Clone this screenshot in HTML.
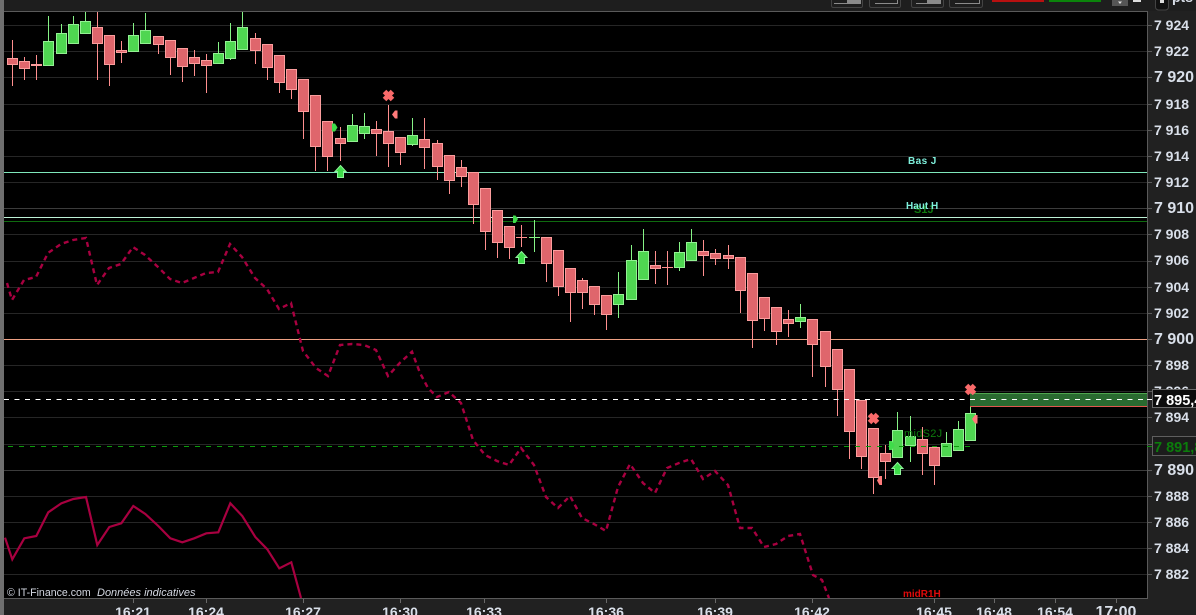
<!DOCTYPE html>
<html lang="fr"><head><meta charset="utf-8"><title>Graphique</title>
<style>
html,body{margin:0;padding:0;background:#000;width:1196px;height:615px;overflow:hidden}
svg{display:block}
text{font-family:"Liberation Sans",sans-serif}
.y{font-weight:700;font-size:14px;fill:#d9dfe9}
.Y{font-weight:700;font-size:16px;fill:#d9dfe9}
.t{font-weight:700;font-size:14px;fill:#d9dfe9;text-anchor:middle}
</style></head><body>
<svg width="1196" height="615" viewBox="0 0 1196 615" xmlns="http://www.w3.org/2000/svg">
<rect width="1196" height="615" fill="#000"/>
<!-- chart grid -->
<path d="M4 25.500H1147M4 51.500H1147M4 77.500H1147M4 104.500H1147M4 130.500H1147M4 156.500H1147M4 182.500H1147M4 234.500H1147M4 261.500H1147M4 287.500H1147M4 313.500H1147M4 365.500H1147M4 391.500H1147M4 417.500H1147M4 444.500H1147M4 496.500H1147M4 522.500H1147M4 548.500H1147M4 574.500H1147" stroke="#262626" fill="none"/>
<path d="M4 208.500H1147M4 470.500H1147" stroke="#3c3c3c" fill="none"/>
<!-- level lines -->
<path d="M4 172.500H1147" stroke="#7fe8bb"/>
<path d="M4 217.500H1147" stroke="#bdf2d6"/>
<path d="M4 221.500H1147" stroke="#0f6a0f"/>
<path d="M4 339.500H1147" stroke="#eda184"/>
<!-- crimson lines -->
<polyline fill="none" stroke="#a80040" stroke-width="2.200" points="5,537.700 12.300,559.300 24.300,538.300 36.300,536 48.300,512.300 61.300,503.300 73.300,499 86,497 97.300,545 109.300,527 121.300,523.300 133.300,506 145.300,514 158.300,526 170.300,538.300 182.300,542.300 194.300,538.300 206.300,533.300 218.300,532.300 230.300,503.300 242.300,516 255.300,537 267.300,549.300 279.300,568.300 291.300,562.300 301,598"/>
<polyline fill="none" stroke="#a80040" stroke-width="2.400" stroke-dasharray="5 4" points="7,283 12,300 24,280 36,277 48,253 61,244 73,240 86,238 97,285 109,268 121,264 133,247 145,255 158,267 170,279 182,283 194,278 206,273 218,272 230,244 242,257 255,278 267,289 279,309 291,303 303,351 316,368 328,376 340,345 352,344 364,345 376,350 388,376 400,362.700 412,351.700 420,373 428,388 437,397 449,392 461,403 473,440 485,455 497,461 509,465 521,448 534,465 546,497 558,508 570,496 582,518 594,524 606,531 618,487 630,464 643,483 655,493 667,468 679,463 691,459 703,479 715,471 728,485 740,528 752,528 764,547 776,544 788,536 800,534 813,575 822,580 829,598"/>
<!-- wicks -->
<path fill="none" stroke="#ff8f8f" d="M12.500 40V86M24.500 57V80M36.500 55V80M97.500 12V80M109.500 35V86M121.500 41V63M158.500 36V54M170.500 40V75M182.500 48V82M194.500 50V76M206.500 54V93M255.500 33V64M267.500 44V80M279.500 55V93M291.500 69V99M303.500 79V139M315.500 95V171M327.500 121V171M340.500 127V161M376.500 121V156M388.500 105V167M400.500 137V165M424.500 118V169M437.500 140V180M449.500 155V194M461.500 160V187M473.500 172V224M485.500 188V250M497.500 210V258M509.500 226V259M521.500 225V247M516 237.500H527M546.500 237V282M558.500 250V296M570.500 268V322M582.500 278V309M594.500 286V315M606.500 295V330M655.500 251V284M667.500 251V285M662 267.500H673M703.500 240V276M715.500 249V265M728.500 245V269M740.500 257V313M752.500 273V348M764.500 297V331M776.500 307V345M788.500 310V337M812.500 319V377M825.500 331V387M837.500 349V416M849.500 369V459M861.500 400V469M873.500 428V494M885.500 445V479M922.500 427V475M934.500 447V485"/>
<path fill="none" stroke="#86f386" d="M48.500 16V66M61.500 24V53M73.500 16V43M85.500 12V33M133.500 23V51M145.500 13V43M218.500 42V63M230.500 23V60M242.500 12V49M352.500 114V141M364.500 113V139M412.500 118V146M534.500 220V252M529 237.500H540M618.500 272V318M631.500 245V299M643.500 229V279M679.500 242V271M691.500 229V260M800.500 304V328M897.500 412V457M910.500 416V462M946.500 432V456M958.500 421V450M970.500 393V440"/>
<!-- red bodies -->
<path fill="#df666c" stroke="#fb9d9d" d="M7.500 58.500h10v6h-10zM19.500 61.500h10v7h-10zM31.500 64.500h10v1h-10zM92.500 27.500h10v16h-10zM104.500 35.500h10v29h-10zM116.500 50.500h10v2h-10zM153.500 36.500h10v8h-10zM165.500 40.500h10v17h-10zM177.500 48.500h10v18h-10zM189.500 57.500h10v6h-10zM201.500 60.500h10v5h-10zM250.500 38.500h10v12h-10zM262.500 44.500h10v23h-10zM274.500 55.500h10v27h-10zM286.500 69.500h10v20h-10zM298.500 79.500h10v32h-10zM310.500 95.500h10v51h-10zM322.500 121.500h10v35h-10zM335.500 138.500h10v5h-10zM371.500 129.500h10v4h-10zM383.500 131.500h10v12h-10zM395.500 137.500h10v15h-10zM419.500 139.500h10v8h-10zM432.500 143.500h10v23h-10zM444.500 155.500h10v25h-10zM456.500 167.500h10v9h-10zM468.500 172.500h10v32h-10zM480.500 188.500h10v43h-10zM492.500 210.500h10v32h-10zM504.500 226.500h10v21h-10zM541.500 237.500h10v26h-10zM553.500 250.500h10v36h-10zM565.500 268.500h10v24h-10zM577.500 280.500h10v12h-10zM589.500 286.500h10v18h-10zM601.500 295.500h10v19h-10zM650.500 265.500h10v3h-10zM698.500 251.500h10v4h-10zM710.500 253.500h10v5h-10zM723.500 255.500h10v3h-10zM735.500 257.500h10v33h-10zM747.500 273.500h10v47h-10zM759.500 297.500h10v21h-10zM771.500 307.500h10v24h-10zM783.500 319.500h10v4h-10zM807.500 319.500h10v25h-10zM820.500 331.500h10v35h-10zM832.500 349.500h10v40h-10zM844.500 369.500h10v62h-10zM856.500 400.500h10v56h-10zM868.500 428.500h10v49h-10zM880.500 453.500h10v8h-10zM917.500 439.500h10v14h-10zM929.500 447.500h10v18h-10z"/>
<!-- green bodies -->
<path fill="#4fd651" stroke="#93f093" d="M43.500 41.500h10v24h-10zM56.500 33.500h10v20h-10zM68.500 24.500h10v19h-10zM80.500 21.500h10v12h-10zM128.500 35.500h10v16h-10zM140.500 30.500h10v13h-10zM213.500 53.500h10v10h-10zM225.500 41.500h10v17h-10zM237.500 27.500h10v22h-10zM347.500 125.500h10v16h-10zM359.500 126.500h10v7h-10zM407.500 135.500h10v9h-10zM613.500 294.500h10v10h-10zM626.500 260.500h10v39h-10zM638.500 251.500h10v28h-10zM674.500 252.500h10v15h-10zM686.500 242.500h10v18h-10zM795.500 317.500h10v4h-10zM892.500 430.500h10v27h-10zM905.500 436.500h10v9h-10zM941.500 443.500h10v13h-10zM953.500 429.500h10v21h-10zM965.500 413.500h10v27h-10z"/>
<!-- price box on chart -->
<rect x="970" y="393" width="177" height="14" fill="#2a6a30"/>
<path d="M970 393.500H1147" stroke="#4ea64e"/>
<path d="M970 406.500H1147" stroke="#e0584f"/>
<path d="M4 399.500H1147" stroke="#fff" stroke-dasharray="5 5.500"/>
<path d="M8 446.500H970" stroke="#0c9a0c" stroke-dasharray="5 6"/>
<!-- markers X -->
<path d="M384.500 91.500L392.500 99.500M392.500 91.500L384.500 99.500" stroke="#f96a6a" stroke-width="5" fill="none"/>
<path d="M869.500 414.500L877.500 422.500M877.500 414.500L869.500 422.500" stroke="#f96a6a" stroke-width="5" fill="none"/>
<path d="M966.500 385.500L974.500 393.500M974.500 385.500L966.500 393.500" stroke="#f96a6a" stroke-width="5" fill="none"/>
<!-- up arrows -->
<path d="M340.500 165.500L346 171.500H343.500V177.500H337.500V171.500H335z" fill="#3fdc4a" stroke="#8ff59a"/>
<path d="M521.500 251.500L527 257.500H524.500V263.500H518.500V257.500H516z" fill="#3fdc4a" stroke="#8ff59a"/>
<path d="M897.500 462.500L903 468.500H900.500V474.500H894.500V468.500H892z" fill="#3fdc4a" stroke="#8ff59a"/>
<!-- triangles -->
<path d="M332 123.500H335L337.500 127.500L335 131.500H332z" fill="#3fdc4a"/>
<path d="M513 215.500H515.500L518 219L515.500 223H513z" fill="#3fdc4a"/>
<path d="M889 441H892L894.500 445.500L892 450H889z" fill="#3fdc4a"/>
<path d="M397.500 110.500V118.500H395L392 114.500L395 110.500z" fill="#ff7b7b"/>
<path d="M882 476V485H879.500L877 480.500L879.500 476z" fill="#ff7b7b"/>
<path d="M977.500 415V423.500H975L972 419L975 415z" fill="#ff7b7b"/>
<!-- chart labels -->
<text x="908" y="164" font-size="10" font-weight="700" letter-spacing=".4" fill="#7ff0dc">Bas J</text>
<text x="914" y="213" font-size="11" font-weight="700" fill="#0f7a0f">S1J</text>
<text x="906" y="209" font-size="10" font-weight="700" fill="#7ff0dc">Haut H</text>
<text x="904" y="437" font-size="11" fill="#0d7a0d" letter-spacing=".3">midS2J</text>
<text x="903" y="597" font-size="10" font-weight="700" fill="#e00a0a">midR1H</text>
<text x="7" y="596" font-size="10.600" fill="#d4d8e2">© IT-Finance.com</text>
<text x="97" y="596" font-size="11" font-style="italic" fill="#d4d8e2">Données indicatives</text>
<!-- panels -->
<rect x="0" y="0" width="1196" height="11" fill="#1e1e1e"/>
<rect x="1148" y="11" width="48" height="604" fill="#212121"/>
<rect x="0" y="599" width="1196" height="16" fill="#212121"/>
<rect x="0" y="0" width="4" height="615" fill="#6f6f6f"/>
<path d="M4 11.500H1147.500V598.500H4" fill="none" stroke="#5a5a5a"/>
<!-- toolbar -->
<g fill="none" stroke="#8b8b8b">
<path d="M831.500 0V5.500Q831.500 7.500 833.500 7.500H861Q862.500 7.500 862.500 5.500V0" stroke="#444"/>
<path d="M869.500 0V5.500Q869.500 7.500 871.500 7.500H899Q900.500 7.500 900.500 5.500V0" stroke="#444"/>
<path d="M911.500 0V5.500Q911.500 7.500 913.500 7.500H941Q943.500 7.500 943.500 5.500V0" stroke="#444"/>
<path d="M949.500 0V5.500Q949.500 7.500 951.500 7.500H980Q982.500 7.500 982.500 5.500V0" stroke="#444"/>
<path d="M834 3.500H859.500V0M875 3.500H897.500V0M916 3.500H940.500V0M955 3.500H979.500V0"/>
</g>
<rect x="847" y="0" width="14" height="4" fill="#8b8b8b"/>
<rect x="927" y="0" width="14" height="4" fill="#8b8b8b"/>
<rect x="992" y="0" width="52" height="2" fill="#b81010"/>
<rect x="1049" y="0" width="52" height="2" fill="#0b840b"/>
<rect x="1112" y="0" width="16" height="6" fill="#555"/>
<path d="M1118 1.500H1122L1120 4z" fill="#ddd"/>
<rect x="1133" y="0" width="8" height="2" fill="#ddd"/>
<rect x="1155.500" y="-4" width="13" height="14" rx="3" fill="#111" stroke="#444"/>
<rect x="1160" y="0" width="4" height="3" fill="#ddd"/>
<text x="1172" y="2" font-size="14" font-weight="700" fill="#d9dfe9">pts</text>
<!-- y ticks -->
<path stroke="#5a5a5a" d="M1148 25.500h4M1148 51.500h4M1148 77.500h4M1148 104.500h4M1148 130.500h4M1148 156.500h4M1148 182.500h4M1148 208.500h4M1148 234.500h4M1148 261.500h4M1148 287.500h4M1148 313.500h4M1148 339.500h4M1148 365.500h4M1148 391.500h4M1148 417.500h4M1148 444.500h4M1148 470.500h4M1148 496.500h4M1148 522.500h4M1148 548.500h4M1148 574.500h4"/>
<!-- y labels -->
<text class="y" x="1154" y="30">7 924</text>
<text class="y" x="1154" y="56">7 922</text>
<text class="Y" x="1154" y="82">7 920</text>
<text class="y" x="1154" y="109">7 918</text>
<text class="y" x="1154" y="135">7 916</text>
<text class="y" x="1154" y="161">7 914</text>
<text class="y" x="1154" y="187">7 912</text>
<text class="Y" x="1154" y="213">7 910</text>
<text class="y" x="1154" y="239">7 908</text>
<text class="y" x="1154" y="265">7 906</text>
<text class="y" x="1154" y="292">7 904</text>
<text class="y" x="1154" y="318">7 902</text>
<text class="Y" x="1154" y="344">7 900</text>
<text class="y" x="1154" y="370">7 898</text>
<text class="y" x="1154" y="396">7 896</text>
<text class="y" x="1154" y="422">7 894</text>
<text class="Y" x="1154" y="475">7 890</text>
<text class="y" x="1154" y="501">7 888</text>
<text class="y" x="1154" y="527">7 886</text>
<text class="y" x="1154" y="553">7 884</text>
<text class="y" x="1154" y="579">7 882</text>
<!-- axis value boxes -->
<path d="M1147 399.500H1153" stroke="#fff"/>
<path d="M1147 446.500H1153" stroke="#0d8a0d"/>
<rect x="1152.500" y="389.500" width="50" height="18" fill="#0c0c0c" stroke="#6a6a6a"/>
<text x="1154" y="405" font-size="14.500" font-weight="700" fill="#fff">7 895,4</text>
<rect x="1152.500" y="436.500" width="50" height="19" fill="#1c1c1c" stroke="#5f5f5f"/>
<text x="1154" y="452" font-size="14.500" font-weight="700" fill="#0b7d0b">7 891,8</text>
<!-- time axis -->
<path stroke="#6a6a6a" d="M133.500 599v4M206.500 599v4M303.500 599v4M400.500 599v4M484.500 599v4M606.500 599v4M715.500 599v4M812.500 599v4M934.500 599v4M994.500 599v4M1055.500 599v4M1116.500 599v4"/>
<text class="t" x="133" y="617">16:21</text>
<text class="t" x="206" y="617">16:24</text>
<text class="t" x="303" y="617">16:27</text>
<text class="t" x="400" y="617">16:30</text>
<text class="t" x="484" y="617">16:33</text>
<text class="t" x="606" y="617">16:36</text>
<text class="t" x="715" y="617">16:39</text>
<text class="t" x="812" y="617">16:42</text>
<text class="t" x="934" y="617">16:45</text>
<text class="t" x="994" y="617">16:48</text>
<text class="t" x="1055" y="617">16:54</text>
<text x="1116" y="617" font-size="16" font-weight="700" fill="#d9dfe9" text-anchor="middle">17:00</text>
</svg>
</body></html>
